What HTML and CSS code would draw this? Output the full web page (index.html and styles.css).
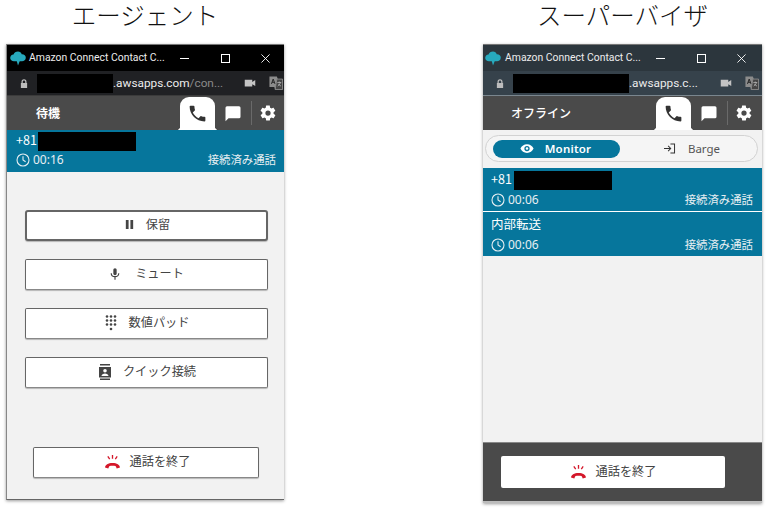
FILE: index.html
```html
<!DOCTYPE html>
<html lang="ja">
<head>
<meta charset="utf-8">
<title>エージェント / スーパーバイザ</title>
<link rel="stylesheet" href="styles.css">
</head>
<body>
<svg class="defs" width="0" height="0" aria-hidden="true">
  <defs>
    <symbol id="i-cloud" viewBox="0 0 16 15"><path d="M8 .6c1.800 0 3.200 1.100 3.700 2.700 2.300-.2 4.100 1.400 4.100 3.400 0 2-1.700 3.500-3.800 3.500H9.700L8 14.600l-1.200-4.400H4C1.800 10.200.2 8.700.2 6.900c0-1.800 1.400-3.200 3.300-3.400C4.100 1.800 5.900.6 8 .6z" fill="#27a9bd"/></symbol>
    <symbol id="i-lock" viewBox="0 0 16 16"><path d="M4 7V5a4 4 0 0 1 8 0v2h1v8H3V7zm2 0h4V5a2 2 0 0 0-4 0z" fill="#bdbdbd"/></symbol>
    <symbol id="i-cam" viewBox="0 0 16 16"><path d="M1 3.500h10v3l4-2.500v8l-4-2.500v3H1z" fill="#c4c4c4"/></symbol>
    <symbol id="i-trans" viewBox="0 0 16 16"><path d="M.5.500h8.500l1 3h5.500v12H7l-1-3H.5z" fill="#8c8c8c"/><path d="M9 3.500h6.500v12H7z" fill="#444" stroke="#8c8c8c"/><path d="M2.800 9 4.800 3.500 6.800 9M3.500 7.200h2.600" fill="none" stroke="#222" stroke-width="1.100"/><path d="M9.500 7.500h4.500M11.700 6.300v1.200M13 7.500c-.5 2-1.500 3-3 4M10.700 9c.5 1 1.500 2 3 2.500" fill="none" stroke="#bbb" stroke-width=".9"/></symbol>
    <symbol id="i-phone" viewBox="0 0 24 24"><path d="M6.600 10.800c1.400 2.800 3.800 5.100 6.600 6.600l2.200-2.200c.3-.3.700-.4 1-.2 1.100.4 2.300.6 3.600.6.600 0 1 .4 1 1V20c0 .6-.4 1-1 1C10.600 21 3 13.400 3 4c0-.6.400-1 1-1h3.500c.6 0 1 .4 1 1 0 1.300.2 2.500.6 3.600.1.300 0 .7-.2 1z"/></symbol>
    <symbol id="i-chat" viewBox="0 0 24 24"><path d="M20 3H4a2 2 0 0 0-2 2v18l4-4h14a2 2 0 0 0 2-2V5a2 2 0 0 0-2-2z"/></symbol>
    <symbol id="i-gear" viewBox="0 0 24 24"><path d="M19.400 13c.1-.3.100-.7.100-1s0-.7-.1-1l2.100-1.600c.2-.2.200-.4.100-.6l-2-3.500c-.1-.2-.4-.3-.6-.2l-2.500 1c-.5-.4-1.100-.7-1.700-1l-.4-2.700c0-.2-.2-.4-.5-.4h-4c-.2 0-.4.200-.5.400l-.4 2.700c-.6.200-1.100.6-1.700 1l-2.500-1c-.2-.1-.5 0-.6.200l-2 3.500c-.1.200-.1.400.1.600L4.500 11c-.1.300-.1.700-.1 1s0 .7.100 1l-2.100 1.600c-.2.200-.2.400-.1.600l2 3.500c.1.200.4.300.6.200l2.500-1c.5.400 1.100.7 1.700 1l.4 2.700c0 .2.200.4.500.4h4c.2 0 .5-.2.500-.4l.4-2.700c.6-.2 1.100-.6 1.700-1l2.500 1c.2.100.5 0 .6-.2l2-3.500c.1-.2.100-.4-.1-.6zM12 15.500a3.500 3.500 0 1 1 0-7 3.500 3.500 0 0 1 0 7z"/></symbol>
    <symbol id="i-clock" viewBox="0 0 14 14"><circle cx="7" cy="7" r="6" fill="none" stroke="currentColor" stroke-width="1.100"/><path d="M7 3.200V7l2.600 1.800" fill="none" stroke="currentColor" stroke-width="1.100"/></symbol>
    <symbol id="i-pause" viewBox="0 0 12 12"><path d="M2 1h3v10H2zM7 1h3v10H7z"/></symbol>
    <symbol id="i-mic" viewBox="0 0 12 16"><path d="M6 1a2 2 0 0 1 2 2v4.500a2 2 0 0 1-4 0V3a2 2 0 0 1 2-2z"/><path d="M1.500 7c0 2.500 2 4.200 4.500 4.200S10.500 9.500 10.500 7M6 11v4" fill="none" stroke="currentColor" stroke-width="1.400"/></symbol>
    <symbol id="i-pad" viewBox="0 0 12 16"><circle cx="2" cy="1.500" r="1.300"/><circle cx="6" cy="1.500" r="1.300"/><circle cx="10" cy="1.500" r="1.300"/><circle cx="2" cy="5.500" r="1.300"/><circle cx="6" cy="5.500" r="1.300"/><circle cx="10" cy="5.500" r="1.300"/><circle cx="2" cy="9.500" r="1.300"/><circle cx="6" cy="9.500" r="1.300"/><circle cx="10" cy="9.500" r="1.300"/><circle cx="6" cy="14" r="1.300"/></symbol>
    <symbol id="i-contact" viewBox="0 0 14 16"><path d="M2 0h10v1.500H2zM2 14.500h10V16H2z"/><path fill-rule="evenodd" d="M1 3h12v10.500H1zM7 5a1.800 1.800 0 1 0 0 3.600A1.800 1.800 0 0 0 7 5zM3.500 12h7c0-1.800-1.800-2.600-3.500-2.600S3.500 10.200 3.500 12z"/></symbol>
    <symbol id="i-end" viewBox="0 0 18 16"><path d="M1 14.500c0-3 3.500-5 8-5s8 2 8 5l-3.500 1-1-2.500c-2-.6-5-.6-7 0l-1 2.500z" fill="#d4172a"/><path d="M9 1v4M4 2.500l2 3M14 2.500l-2 3" fill="none" stroke="#d4172a" stroke-width="1.400"/></symbol>
    <symbol id="i-eye" viewBox="0 0 16 12"><path fill-rule="evenodd" d="M8 1c3.400 0 6.200 2 7.500 5-1.300 3-4.100 5-7.500 5S1.800 9 .5 6C1.800 3 4.600 1 8 1zm0 2a3 3 0 1 0 0 6 3 3 0 0 0 0-6zm0 1.500a1.500 1.500 0 1 1 0 3 1.500 1.500 0 0 1 0-3z"/></symbol>
    <symbol id="i-barge" viewBox="0 0 14 12"><path d="M1 6h7M5.500 3.200 8.300 6 5.500 8.800M8 1h4.500v10H8" fill="none" stroke="currentColor" stroke-width="1.100"/></symbol>
  </defs>
</svg>

<main class="page">
  <section class="col col-agent">
    <h2 class="heading">エージェント</h2>
    <div class="window window-agent">
      <div class="titlebar">
        <svg class="logo"><use href="#i-cloud"/></svg>
        <span class="title-text">Amazon Connect Contact C...</span>
        <span class="winbtns">
          <span class="wb-min"></span><span class="wb-max"></span>
          <svg class="wb-close" viewBox="0 0 10 10"><path d="M.5.500l9 9M9.500.500l-9 9" stroke="#fff" stroke-width="1" fill="none"/></svg>
        </span>
      </div>
      <div class="addrbar">
        <svg class="lock"><use href="#i-lock"/></svg>
        <span class="url"><span class="redact redact-url-a"></span><span class="url-host">.awsapps.com</span><span class="url-path">/con...</span></span>
        <svg class="cam"><use href="#i-cam"/></svg>
        <svg class="trans"><use href="#i-trans"/></svg>
      </div>
      <div class="ccpbar">
        <span class="status status-agent">待機</span>
        <span class="tab"><svg class="tab-ic"><use href="#i-phone"/></svg></span>
        <span class="plain-ic"><svg class="chat-ic"><use href="#i-chat"/></svg></span>
        <span class="divider"></span>
        <span class="plain-ic gear-wrap"><svg class="gear-ic"><use href="#i-gear"/></svg></span>
      </div>
      <div class="call call-a">
        <div class="call-top">+81<span class="redact redact-num"></span></div>
        <div class="call-bottom">
          <span class="timer"><svg class="clock"><use href="#i-clock"/></svg>00:16</span>
          <span class="state">接続済み通話</span>
        </div>
      </div>
      <div class="agent-body">
        <div class="actions">
          <button class="btn btn-strong"><svg class="ic ic-pause"><use href="#i-pause"/></svg>保留</button>
          <button class="btn"><svg class="ic ic-mic"><use href="#i-mic"/></svg>ミュート</button>
          <button class="btn"><svg class="ic ic-pad"><use href="#i-pad"/></svg>数値パッド</button>
          <button class="btn"><svg class="ic ic-contact"><use href="#i-contact"/></svg>クイック接続</button>
        </div>
        <button class="btn btn-end"><svg class="ic ic-end"><use href="#i-end"/></svg>通話を終了</button>
      </div>
    </div>
  </section>

  <section class="col col-super">
    <h2 class="heading">スーパーバイザ</h2>
    <div class="window window-super">
      <div class="titlebar titlebar-super">
        <svg class="logo"><use href="#i-cloud"/></svg>
        <span class="title-text">Amazon Connect Contact C...</span>
        <span class="winbtns">
          <span class="wb-min"></span><span class="wb-max"></span>
          <svg class="wb-close" viewBox="0 0 10 10"><path d="M.5.500l9 9M9.500.500l-9 9" stroke="#fff" stroke-width="1" fill="none"/></svg>
        </span>
      </div>
      <div class="addrbar addrbar-super">
        <svg class="lock"><use href="#i-lock"/></svg>
        <span class="url"><span class="redact redact-url-b"></span><span class="url-host">.awsapps.c...</span></span>
        <svg class="cam"><use href="#i-cam"/></svg>
        <svg class="trans"><use href="#i-trans"/></svg>
      </div>
      <div class="ccpbar">
        <span class="status status-super">オフライン</span>
        <span class="tab"><svg class="tab-ic"><use href="#i-phone"/></svg></span>
        <span class="plain-ic"><svg class="chat-ic"><use href="#i-chat"/></svg></span>
        <span class="divider"></span>
        <span class="plain-ic gear-wrap"><svg class="gear-ic"><use href="#i-gear"/></svg></span>
      </div>
      <div class="super-body">
        <div class="toggle">
          <span class="seg seg-on"><svg class="seg-eye"><use href="#i-eye"/></svg>Monitor</span>
          <span class="seg seg-off"><svg class="seg-barge"><use href="#i-barge"/></svg>Barge</span>
        </div>
        <div class="call call-s1">
          <div class="call-top">+81<span class="redact redact-num"></span></div>
          <div class="call-bottom">
            <span class="timer"><svg class="clock"><use href="#i-clock"/></svg>00:06</span>
            <span class="state">接続済み通話</span>
          </div>
        </div>
        <div class="call call-s2">
          <div class="call-top">内部転送</div>
          <div class="call-bottom">
            <span class="timer"><svg class="clock"><use href="#i-clock"/></svg>00:06</span>
            <span class="state">接続済み通話</span>
          </div>
        </div>
      </div>
      <div class="footer">
        <button class="btn btn-footer"><svg class="ic ic-end"><use href="#i-end"/></svg>通話を終了</button>
      </div>
    </div>
  </section>
</main>
</body>
</html>
```

FILE: styles.css
```css
* { box-sizing: border-box; }
html, body { margin: 0; padding: 0; background: #fff; }
body {
  width: 775px;
  height: 514px;
  overflow: hidden;
  font-family: "Noto Sans CJK JP", "Noto Sans", sans-serif;
}
.defs { position: absolute; }
.page { display: flex; padding-left: 6px; gap: 199px; }
.col { display: flex; flex-direction: column; }
.col-agent { width: 278px; }
.col-super { width: 279px; }
.heading {
  margin: 0;
  height: 44px;
  font-size: 24.5px;
  line-height: 30px;
  padding-bottom: 14px;
  font-weight: 300;
  color: #111;
  text-align: center;
  white-space: nowrap;
}
.window {
  display: flex;
  flex-direction: column;
  background: #f2f2f2;
  box-shadow: 0 1px 3px rgba(0, 0, 0, .4);
}
.window-agent { height: 456px; border-left: 1px solid #888; border-bottom: 1px solid #666; }
.window-super { height: 459px; }

.titlebar {
  display: flex;
  align-items: center;
  height: 27px;
  flex: none;
  background: #000;
  border-top: 1px solid #777;
  padding: 0 0 0 3px;
  color: #ededed;
  font: 10.4px/1 Roboto, sans-serif;
}
.titlebar-super { background: #2c363d; padding-left: 2px; }
.logo { width: 16px; height: 15px; flex: none; }
.title-text { margin-left: 3px; width: 139px; white-space: nowrap; }
.titlebar-super .title-text { margin-left: 4px; }
.winbtns { display: flex; align-items: center; margin-left: 12px; }
.wb-min { width: 9px; height: 1px; background: #fff; }
.wb-max { width: 9px; height: 9px; border: 1px solid #fff; margin-left: 32px; }
.wb-close { width: 9px; height: 9px; margin-left: 31px; }

.addrbar {
  display: flex;
  align-items: center;
  height: 25px;
  flex: none;
  background: #202124;
  padding-left: 12px;
  font: 11.8px/1 Roboto, sans-serif;
  border-bottom: 1px solid #3b3b3b;
}
.addrbar-super { background: #36424b; border-bottom-color: #7a868e; }
.lock { width: 10px; height: 11px; flex: none; }
.url { display: flex; align-items: center; margin-left: 8px; width: 186px; white-space: nowrap; flex: none; }
.url-host { color: #ececec; padding-top: 2px; }
.url-path { color: #8a8a8a; padding-top: 2px; }
.redact { display: inline-block; background: #000; flex: none; }
.redact-url-a { width: 76px; height: 19px; }
.redact-url-b { width: 116px; height: 19px; }
.cam { width: 12px; height: 12px; margin-left: 21px; flex: none; }
.trans { width: 14px; height: 14px; margin-left: 13px; flex: none; }

.ccpbar {
  display: flex;
  align-items: center;
  height: 34px;
  flex: none;
  background: #4a4a4a;
}
.status { color: #fff; font-size: 12px; font-weight: 700; padding-bottom: 2px; }
.status-agent { margin-left: 29px; width: 144px; }
.status-super { margin-left: 28px; width: 145px; font-weight: 500; }
.tab {
  position: relative;
  display: flex;
  align-items: center;
  justify-content: center;
  width: 35px;
  height: 33px;
  margin-top: 1px;
  align-self: flex-start;
  background: #fff;
  border-radius: 9px 9px 0 0;
}
.tab::before, .tab::after {
  content: "";
  position: absolute;
  bottom: 0;
  width: 4px;
  height: 4px;
}
.tab::before { left: -4px; background: radial-gradient(circle at 0 0, transparent 4px, #fff 4.500px); }
.tab::after { right: -4px; background: radial-gradient(circle at 100% 0, transparent 4px, #fff 4.500px); }
.tab-ic { width: 21px; height: 21px; fill: #333; }
.plain-ic { display: flex; align-items: center; justify-content: center; fill: #fff; }
.chat-ic { width: 18px; height: 18px; margin-left: 9px; margin-right: 9px; }
.divider { width: 1px; height: 24px; background: #6a6a6a; }
.gear-wrap { margin-left: 7px; }
.gear-ic { width: 18px; height: 18px; }

.call { background: #06769c; color: #fff; flex: none; }
.call-a { height: 42px; padding: 0 8px 0 9px; }
.call-top { display: flex; align-items: flex-start; height: 19px; font-size: 12.5px; line-height: 16px; }
.call-a .call-top { margin-top: 2px; }
.call-a .redact { margin-left: 1px; }
.call-s1 .redact { margin-left: 2px; }
.call-bottom {
  display: flex;
  align-items: center;
  justify-content: space-between;
  height: 19px;
  font-size: 11.4px;
}
.call-a .call-bottom { margin-top: -1px; }
.redact-num { width: 98px; height: 19px; }
.timer { display: flex; align-items: center; font: 12px/1 "Noto Sans", sans-serif; color: #e6eef2; }
.clock { width: 14px; height: 14px; margin-right: 3px; color: #e6eef2; }
.state { color: #e6eef2; padding-bottom: 2px; }

.agent-body {
  flex: 1;
  display: flex;
  flex-direction: column;
  align-items: center;
  padding: 38px 0 21px 1px;
  justify-content: space-between;
}
.actions { display: flex; flex-direction: column; gap: 18px; }
.btn {
  display: flex;
  align-items: center;
  justify-content: center;
  width: 243px;
  height: 31px;
  padding: 0 0 2px 2px;
  background: #fff;
  color: #444;
  border: 1px solid #666;
  border-bottom-color: #888;
  border-radius: 2px;
  font: 12.2px/1 "Noto Sans CJK JP", sans-serif;
  box-shadow: 0 1px 1px rgba(0, 0, 0, .25);
}
.btn-strong { border: 2px solid #666; border-radius: 3px; }
.btn-end { width: 226px; }
.ic { flex: none; fill: #444; color: #444; }
.ic-pause { width: 11px; height: 11px; margin-right: 11px; }
.ic-mic { width: 10px; height: 14px; margin-right: 15px; }
.ic-pad { width: 12px; height: 16px; margin-right: 12px; }
.ic-contact { width: 14px; height: 16px; margin-right: 11px; }
.ic-end { width: 17px; height: 15px; margin-right: 9px; }

.super-body { flex: 1; display: flex; flex-direction: column; }
.toggle {
  display: flex;
  align-items: center;
  height: 27px;
  margin: 5px 4px 6px 2px;
  padding: 0 7px;
  background: #f5f5f5;
  border: 1px solid #d2d2d2;
  border-radius: 14px;
  font: 11.5px/1 "Noto Sans", sans-serif;
}
.seg { display: flex; align-items: center; justify-content: center; height: 18px; border-radius: 9px; }
.seg-on { width: 127px; background: #06769c; color: #fff; font-weight: 600; letter-spacing: .2px; padding-right: 2px; }
.seg-off { flex: 1; color: #555; padding-left: 13px; }
.seg-eye { width: 14px; height: 11px; margin-right: 11px; fill: #fff; }
.seg-barge { width: 13px; height: 11px; margin-right: 12px; color: #333; }
.call-s1 { height: 44px; padding: 3px 9px 0 8px; border-bottom: 1px solid #fff; }
.call-s2 { height: 44px; padding: 4px 9px 0 8px; }

.footer {
  display: flex;
  align-items: center;
  height: 61px;
  flex: none;
  padding-left: 18px;
  background: #4a4a4a;
  border-top: 1px solid #888;
  border-bottom: 2px solid #bbb;
}
.btn-footer { width: 224px; height: 32px; border: 0; box-shadow: none; padding-left: 0; }
```
